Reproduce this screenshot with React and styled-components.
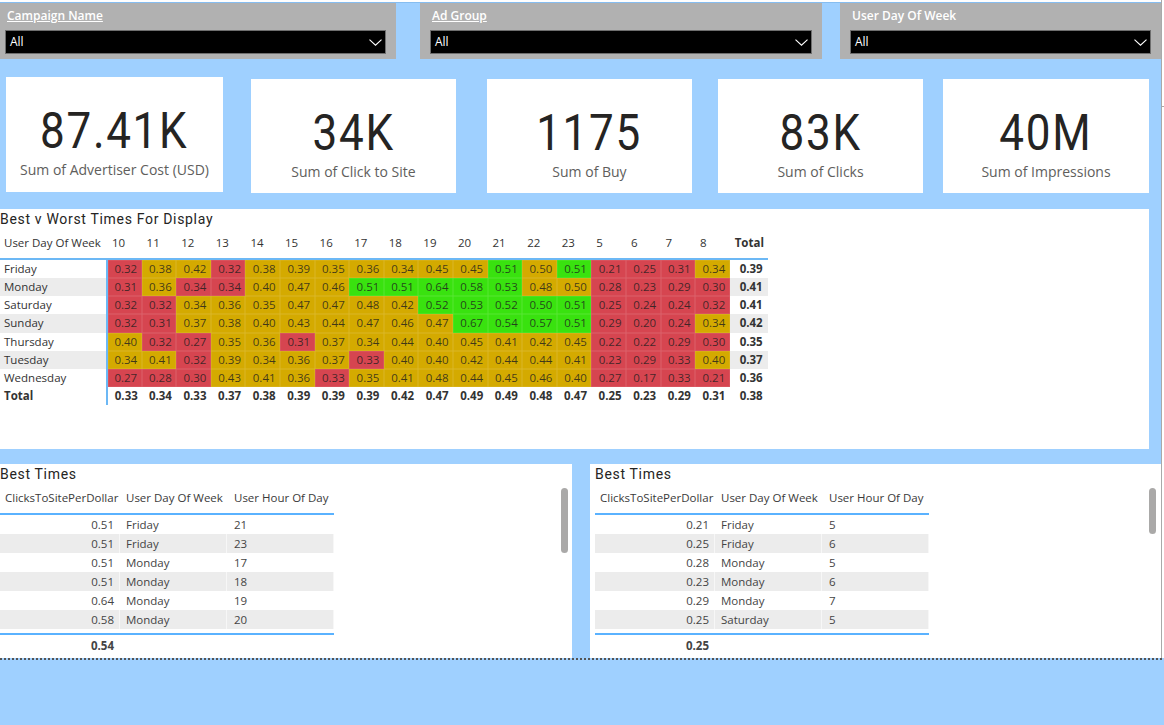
import React from "react";
import styled, { createGlobalStyle } from "styled-components";

const Global = createGlobalStyle`
  html, body { margin: 0; padding: 0; height: 725px; overflow: hidden; background: #9fd0ff; }
  * { box-sizing: border-box; }
`;

const UI = `"Open Sans", "Noto Sans", sans-serif`;
const DIN = `Roboto, "Liberation Sans", sans-serif`;

const Page = styled.div`
  width: 1164px;
  height: 725px;
  background: #9fd0ff;
  display: flex;
  flex-direction: column;
  overflow: hidden;
`;
const Upper = styled.div`
  display: flex;
  height: 658px;
  flex: none;
`;
const Main = styled.main`
  width: 1161px;
  flex: none;
  display: flex;
  flex-direction: column;
`;
const SideStrip = styled.div`
  flex: 1;
  background: #fff;
  border-left: 1px solid #a9a9a9;
  padding-top: 106px;
`;
const StripTick = styled.div`
  height: 1px;
  background: #a9a9a9;
`;
const TopEdge = styled.div`
  height: 3px;
  background: #fff;
  border-bottom: 1px solid #86bdf0;
  flex: none;
`;
const Filters = styled.div`
  display: flex;
  height: 56px;
  flex: none;
`;
const Slicer = styled.div`
  width: ${(p) => p.$w}px;
  margin-left: ${(p) => p.$gap || 0}px;
  background: #b1b1b1;
  padding: 5px 10px 0 ${(p) => p.$pl}px;
`;
const SlicerTitle = styled.div`
  font: 600 12px/15px ${UI};
  color: #fff;
  margin-left: 2px;
  height: 22px;
  text-decoration: ${(p) => (p.$link ? "underline" : "none")};
`;
const Select = styled.div`
  height: 24px;
  background: #000;
  border: 1px solid #6e6e6e;
  color: #fff;
  font: 500 12px/24px ${UI};
  padding-left: 4px;
  display: flex;
  justify-content: space-between;
  align-items: center;
`;
const Chevron = styled.svg`
  width: 13px;
  height: 7px;
  margin-right: 3px;
  fill: none;
  stroke: #fff;
  stroke-width: 1.1;
`;
const Cards = styled.div`
  display: flex;
  align-items: flex-start;
  padding-left: 6px;
  margin-top: 18px;
  height: 132px;
  flex: none;
`;
const Card = styled.div`
  width: ${(p) => p.$w}px;
  height: ${(p) => p.$h}px;
  margin-left: ${(p) => p.$gap || 0}px;
  margin-top: ${(p) => p.$top || 0}px;
  background: #fff;
  display: flex;
  flex-direction: column;
  align-items: center;
  padding-top: 26px;
`;
const CardValue = styled.div`
  font: 400 50px/56px ${DIN};
  color: #252423;
  letter-spacing: 1.9px;
  transform: scaleX(0.88);
`;
const CardLabel = styled.div`
  font: 400 14px/20px ${UI};
  color: #605e5c;
  margin-top: 1px;
`;
const HeatPanel = styled.section`
  width: 1149px;
  height: 240px;
  background: #fff;
  flex: none;
`;
const PanelTitle = styled.h2`
  margin: 0;
  font: 400 14px/20px ${DIN};
  color: #252423;
  letter-spacing: 0.68px;
`;
const COLS = "108px 33.6px repeat(17, 34.6px) 38px";
const HeatGrid = styled.div`
  display: grid;
  grid-template-columns: ${COLS};
  grid-auto-rows: 18.14px;
  width: 767.8px;
  font: 400 11.5px/18.5px ${UI};
  color: #333;
`;
const HeatHeadRow = styled.div`
  display: grid;
  grid-template-columns: 107px repeat(18, 34.6px) 38px;
  width: 767.8px;
  height: 31px;
  border-bottom: 2px solid #6cb8f5;
  font: 400 11.5px/27px ${UI};
  color: #333;
`;
const HeadCell = styled.div`
  padding-left: ${(p) => (p.$first ? 4 : 5)}px;
  font-weight: ${(p) => (p.$bold ? 700 : 400)};
  white-space: nowrap;
`;
const DayCell = styled.div`
  padding-left: 4px;
  border-right: 2px solid #6cb8f5;
  background: ${(p) => (p.$alt ? "#ececec" : "#fff")};
  font-weight: ${(p) => (p.$bold ? 700 : 400)};
`;
const Colors = { r: "#d64550", y: "#d4aa00", g: "#39e20f" };
const ValueCell = styled.div`
  text-align: center;
  padding-left: ${(p) => (p.$first ? 2 : 3)}px;
  background: ${(p) => Colors[p.$c]};
  box-shadow: inset 0 0 0 0.5px rgba(255, 255, 255, 0.16);
  color: rgba(30, 30, 30, 0.82);
`;
const TotalCell = styled.div`
  text-align: center;
  padding-left: ${(p) => (p.$last ? 5 : 3)}px;
  font-weight: 700;
  background: ${(p) => (p.$alt ? "#ececec" : "#fff")};
`;
const Bottom = styled.div`
  display: flex;
  margin-top: 15px;
  flex: 1;
  align-items: stretch;
`;
const ListPanel = styled.section`
  width: ${(p) => p.$w}px;
  margin-left: ${(p) => p.$gap || 0}px;
  background: #fff;
  position: relative;
  padding-left: ${(p) => p.$pad}px;
`;
const ListHead = styled.div`
  display: grid;
  grid-template-columns: 120px 107px 107px;
  width: 334px;
  height: 31px;
  border-bottom: 2px solid #5ab2ff;
  font: 400 11.5px/27px ${UI};
  color: #3a3a3a;
`;
const ListRow = styled.div`
  display: grid;
  grid-template-columns: 120px 107px 107px;
  width: 334px;
  height: 19px;
  background: ${(p) => (p.$alt ? "#ececec" : "#fff")};
  font: 400 11.5px/19px ${UI};
  color: #444;
`;
const ListFoot = styled(ListRow)`
  border-top: 2px solid #5ab2ff;
  height: 24px;
  margin-top: 4px;
  background: #fff;
  font-weight: 700;
  line-height: 22px;
`;
const NumCell = styled.div`
  text-align: right;
  padding-right: 5px;
  border-right: 1px solid rgba(255, 255, 255, 0.6);
`;
const TextCell = styled.div`
  padding-left: ${(p) => p.$p}px;
  white-space: nowrap;
  border-right: 1px solid rgba(255, 255, 255, 0.6);
`;
const HeadText = styled.div`
  padding-left: ${(p) => p.$p}px;
  white-space: nowrap;
`;
const Scrollbar = styled.div`
  position: absolute;
  top: 24px;
  right: ${(p) => p.$r}px;
  width: 7px;
  height: ${(p) => p.$h}px;
  border-radius: 3.5px;
  background: #aaa9a8;
`;
const Dotted = styled.div`
  border-top: 2px dotted #555;
  width: 1162px;
  flex: none;
`;

const hours = [10,11,12,13,14,15,16,17,18,19,20,21,22,23,5,6,7,8];
const rows = [
  ["Friday","32 38 42 32 38 39 35 36 34 45 45 51 50 51 21 25 31 34","39"],
  ["Monday","31 36 34! 34! 40 47 46 51 51 64 58 53 48 50 28 23 29 30","41"],
  ["Saturday","32 32 34 36 35 47 47 48 42 52 53 52 50^ 51 25 24 24 32","41"],
  ["Sunday","32 31 37 38 40 43 44 47 46 47 67 54 57 51 29 20 24 34","42"],
  ["Thursday","40 32 27 35 36 31 37 34 44 40 45 41 42 45 22 22 29 30","35"],
  ["Tuesday","34 41 32 39 34 36 37 33 40 40 42 44 44 41 23 29 33 40","37"],
  ["Wednesday","27 28 30 43 41 36 33 35 41 48 44 45 46 40 27 17 33 21","36"],
];
const totals = "33 34 33 37 38 39 39 39 42 47 49 49 48 47 25 23 29 31 38".split(" ");

const colorOf = (tok) => {
  if (tok.endsWith("!")) return "r";
  if (tok.endsWith("^")) return "g";
  const n = parseInt(tok, 10);
  if (n <= 33) return "r";
  if (n >= 51) return "g";
  return "y";
};
const val = (tok) => "0." + tok.replace(/[!^]/, "");

const Arrow = () => (
  <Chevron viewBox="0 0 13 7"><path d="M0.5 0.6 L6.5 6.2 L12.5 0.6" /></Chevron>
);

const left = [["0.51","Friday","21"],["0.51","Friday","23"],["0.51","Monday","17"],["0.51","Monday","18"],["0.64","Monday","19"],["0.58","Monday","20"]];
const right = [["0.21","Friday","5"],["0.25","Friday","6"],["0.28","Monday","5"],["0.23","Monday","6"],["0.29","Monday","7"],["0.25","Saturday","5"]];

const List = ({ data, total }) => (
  <>
    <ListHead>
      <HeadText $p={5}>ClicksToSitePerDollar</HeadText>
      <HeadText $p={6}>User Day Of Week</HeadText>
      <HeadText $p={7}>User Hour Of Day</HeadText>
    </ListHead>
    {data.map((r, i) => (
      <ListRow key={i} $alt={i % 2 === 1}>
        <NumCell>{r[0]}</NumCell>
        <TextCell $p={6}>{r[1]}</TextCell>
        <TextCell $p={7}>{r[2]}</TextCell>
      </ListRow>
    ))}
    <ListFoot>
      <NumCell>{total}</NumCell>
    </ListFoot>
  </>
);

export default function App() {
  return (
    <Page>
      <Global />
      <Upper>
        <Main>
          <TopEdge />
          <Filters>
            <Slicer $w={396} $pl={5}><SlicerTitle $link>Campaign Name</SlicerTitle><Select>All<Arrow /></Select></Slicer>
            <Slicer $w={402} $gap={24} $pl={10}><SlicerTitle $link>Ad Group</SlicerTitle><Select>All<Arrow /></Select></Slicer>
            <Slicer $w={321} $gap={18} $pl={10}><SlicerTitle>User Day Of Week</SlicerTitle><Select>All<Arrow /></Select></Slicer>
          </Filters>
          <Cards>
            <Card $w={217} $h={115}><CardValue>87.41K</CardValue><CardLabel>Sum of Advertiser Cost (USD)</CardLabel></Card>
            <Card $w={205} $h={114} $gap={28} $top={2}><CardValue>34K</CardValue><CardLabel>Sum of Click to Site</CardLabel></Card>
            <Card $w={205} $h={114} $gap={31} $top={2}><CardValue>1175</CardValue><CardLabel>Sum of Buy</CardLabel></Card>
            <Card $w={205} $h={114} $gap={26} $top={2}><CardValue>83K</CardValue><CardLabel>Sum of Clicks</CardLabel></Card>
            <Card $w={206} $h={114} $gap={20} $top={2}><CardValue>40M</CardValue><CardLabel>Sum of Impressions</CardLabel></Card>
          </Cards>
          <HeatPanel>
            <PanelTitle>Best v Worst Times For Display</PanelTitle>
            <HeatHeadRow>
              <HeadCell $first>User Day Of Week</HeadCell>
              {hours.map((h) => <HeadCell key={h}>{h}</HeadCell>)}
              <HeadCell $bold>Total</HeadCell>
            </HeatHeadRow>
            <HeatGrid>
              {rows.map(([day, vals, total], i) => (
                <React.Fragment key={day}>
                  <DayCell $alt={i % 2 === 1}>{day}</DayCell>
                  {vals.split(" ").map((t, j) => <ValueCell key={j} $first={j === 0} $c={colorOf(t)}>{val(t)}</ValueCell>)}
                  <TotalCell $last $alt={i % 2 === 1}>0.{total}</TotalCell>
                </React.Fragment>
              ))}
              <DayCell $bold>Total</DayCell>
              {totals.map((t, j) => <TotalCell key={j} $last={j === 18}>0.{t}</TotalCell>)}
            </HeatGrid>
          </HeatPanel>
          <Bottom>
            <ListPanel $w={572} $pad={0}>
              <PanelTitle>Best Times</PanelTitle>
              <List data={left} total="0.54" />
              <Scrollbar $r={4} $h={65} />
            </ListPanel>
            <ListPanel $w={571} $gap={18} $pad={5}>
              <PanelTitle>Best Times</PanelTitle>
              <List data={right} total="0.25" />
              <Scrollbar $r={5} $h={46} />
            </ListPanel>
          </Bottom>
        </Main>
        <SideStrip><StripTick /></SideStrip>
      </Upper>
      <Dotted />
    </Page>
  );
}
